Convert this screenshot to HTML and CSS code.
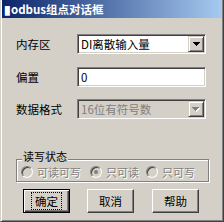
FILE: index.html
```html
<!DOCTYPE html>
<html lang="zh">
<head>
<meta charset="utf-8">
<link rel="stylesheet" href="styles.css">
</head>
<body>
<div class="window">
  <div class="titlebar"><span class="title">▮odbus组点对话框</span></div>
  <div class="content">
    <div class="row">
      <span class="lbl">内存区</span>
      <div class="field combo">
        <span class="value">DI离散输入量</span>
        <span class="dropbtn"><svg width="7" height="4" viewBox="0 0 7 4" shape-rendering="crispEdges"><rect x="0" y="0" width="7" height="1"/><rect x="1" y="1" width="5" height="1"/><rect x="2" y="2" width="3" height="1"/><rect x="3" y="3" width="1" height="1"/></svg></span>
      </div>
    </div>
    <div class="row row2">
      <span class="lbl">偏置</span>
      <div class="field edit"><span class="value">0</span></div>
    </div>
    <div class="row row3">
      <span class="lbl">数据格式</span>
      <div class="field combo disabled">
        <span class="value">16位有符号数</span>
        <span class="dropbtn"><svg width="8" height="5" viewBox="0 0 8 5" shape-rendering="crispEdges"><g fill="#fff"><rect x="1" y="1" width="7" height="1"/><rect x="2" y="2" width="5" height="1"/><rect x="3" y="3" width="3" height="1"/><rect x="4" y="4" width="1" height="1"/></g><g fill="#808080"><rect x="0" y="0" width="7" height="1"/><rect x="1" y="1" width="5" height="1"/><rect x="2" y="2" width="3" height="1"/><rect x="3" y="3" width="1" height="1"/></g></svg></span>
      </div>
    </div>
    <div class="group">
      <span class="legend">读写状态</span>
      <div class="radios">
        <span class="radio r1"><span class="circle"></span><span class="rtext">可读可写</span></span>
        <span class="radio r2"><span class="circle checked"></span><span class="rtext">只可读</span></span>
        <span class="radio r3"><span class="circle"></span><span class="rtext">只可写</span></span>
      </div>
    </div>
    <div class="buttons">
      <div class="btn default"><span class="focus">确定</span></div>
      <div class="btn">取消</div>
      <div class="btn b3">帮助</div>
    </div>
  </div>
</div>
</body>
</html>
```
FILE: styles.css
```css
* { box-sizing: border-box; margin: 0; padding: 0; }
html, body { width: 224px; height: 222px; overflow: hidden; background: #d4d0c8; }
body {
  font-family: "Noto Sans CJK SC", "Liberation Sans", sans-serif;
  font-size: 11.5px;
  color: #000;
}
.window {
  width: 224px;
  height: 222px;
  background: #d4d0c8;
  border-left: 1px solid #d4d0c8;
  border-right: 1px solid #404040;
  border-bottom: 1px solid #404040;
  box-shadow: inset 1px 0 0 #fff, inset -1px -1px 0 #808080;
  padding: 0 1px 1px 1px;
  display: flex;
  flex-direction: column;
}
.titlebar {
  height: 18px;
  background: linear-gradient(to right, #0a246a, #a6caf0);
  padding-left: 2px;
  display: flex;
  align-items: center;
}
.title {
  color: #fff;
  font-weight: bold;
  font-size: 11.5px;
  line-height: 18px;
  white-space: nowrap;
}
.content {
  display: flex;
  flex-direction: column;
  padding: 16px 0 0 14px;
}
.row {
  display: flex;
  align-items: center;
  height: 20px;
}
.row2 { margin-top: 13px; }
.row3 { margin-top: 12px; }
.lbl {
  width: 61px;
  line-height: 16px;
  white-space: nowrap;
}
.field {
  width: 129px;
  height: 20px;
  background: #fff;
  border: 1px solid;
  border-color: #808080 #fff #fff #808080;
  box-shadow: inset 1px 1px 0 #404040, inset -1px -1px 0 #d4d0c8;
  display: flex;
  align-items: center;
  padding: 1px;
}
.value {
  flex: 1;
  padding-left: 2px;
  line-height: 16px;
  white-space: nowrap;
  overflow: hidden;
}
.dropbtn {
  width: 16px;
  height: 16px;
  background: #d4d0c8;
  border: 1px solid;
  border-color: #d4d0c8 #404040 #404040 #d4d0c8;
  box-shadow: inset 1px 1px 0 #fff, inset -1px -1px 0 #808080;
  display: flex;
  align-items: center;
  justify-content: center;
}
.dropbtn svg { display: block; }
.disabled { background: #d4d0c8; }
.disabled .value { color: #808080; }
.group {
  position: relative;
  margin-top: 40px;
  width: 193px;
  height: 23px;
  border: 1px solid #808080;
  box-shadow: inset 1px 1px 0 #fff, 1px 1px 0 #fff;
}
.legend {
  position: absolute;
  top: -10px;
  left: 5px;
  padding: 0 1px;
  background: #d4d0c8;
  font-size: 11px;
  line-height: 12px;
  white-space: nowrap;
}
.radios {
  display: flex;
  align-items: center;
  height: 100%;
  padding: 3px 0 0 4px;
}
.radio {
  display: flex;
  align-items: center;
  gap: 4px;
}
.r1 { width: 69px; }
.r2 { width: 56px; }
.circle {
  width: 12px;
  height: 12px;
  border-radius: 50%;
  border: 1px solid;
  border-color: #808080 #fff #fff #808080;
  box-shadow: inset 1px 1px 0 #404040, inset -1px -1px 0 #d4d0c8;
  background: #d4d0c8;
  display: flex;
  align-items: center;
  justify-content: center;
}
.checked::after {
  content: "";
  width: 4px;
  height: 4px;
  border-radius: 50%;
  background: #808080;
}
.rtext {
  color: #808080;
  text-shadow: 1px 1px 0 #fff;
  font-size: 11px;
  line-height: 12px;
  white-space: nowrap;
}
.buttons {
  display: flex;
  gap: 17px;
  margin-top: 7px;
  padding-left: 7px;
}
.btn {
  width: 47px;
  height: 24px;
  border: 1px solid;
  border-color: #fff #404040 #404040 #fff;
  box-shadow: inset -1px -1px 0 #808080;
  display: flex;
  align-items: center;
  justify-content: center;
  line-height: 14px;
}
.b3 { margin-left: 1px; }
.btn.default {
  border: 1px solid #000;
  box-shadow: inset 1px 1px 0 #fff, inset -1px -1px 0 #404040, inset -2px -2px 0 #808080;
}
.focus {
  outline: 1px dotted #000;
  outline-offset: 0;
  padding: 1px 3px;
}
```
